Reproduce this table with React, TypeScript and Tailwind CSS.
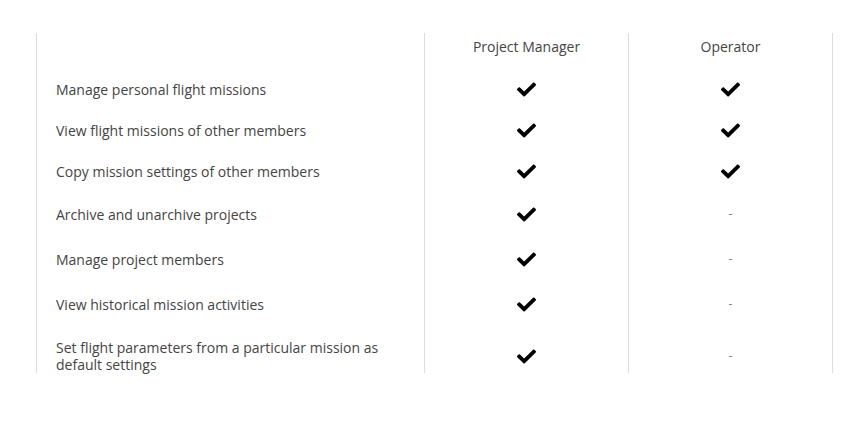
import { FaCheck } from "react-icons/fa";

type Row = { label: string[]; pm: boolean; op: boolean; h: string; pad?: string };

const rows: Row[] = [
  { label: ["Manage personal flight missions"], pm: true, op: true, h: "h-[42px]" },
  { label: ["View flight missions of other members"], pm: true, op: true, h: "h-[40px]" },
  { label: ["Copy mission settings of other members"], pm: true, op: true, h: "h-[42px]" },
  { label: ["Archive and unarchive projects"], pm: true, op: false, h: "h-[44px]" },
  { label: ["Manage project members"], pm: true, op: false, h: "h-[46px]" },
  { label: ["View historical mission activities"], pm: true, op: false, h: "h-[44px]" },
  {
    label: ["Set flight parameters from a particular mission as", "default settings"],
    pm: true,
    op: false,
    h: "h-[47px]",
    pad: "pt-[13px]",
  },
];

const Mark = ({ on }: { on: boolean }) =>
  on ? (
    <FaCheck className="text-black" size={19} />
  ) : (
    <span className="text-[12px] leading-none text-[#777]">-</span>
  );

export default function App() {
  return (
    <div className="min-h-screen bg-white pt-[33px] pl-[36px] font-['Open_Sans',sans-serif] text-[14px] text-[#444]">
      <div className="w-[797px] border-x border-[#dcdcdc]">
        {/* header */}
        <div className="grid h-[35px] grid-cols-[387px_204px_204px] leading-[20px]">
          <div />
          <div className="border-l border-[#dcdcdc] pt-[4px] text-center">Project Manager</div>
          <div className="border-l border-[#dcdcdc] pt-[4px] text-center">Operator</div>
        </div>

        {rows.map((r) => (
          <div key={r.label[0]} className={`grid grid-cols-[387px_204px_204px] ${r.h}`}>
            <div className={`flex flex-col justify-center pl-[19px] leading-[16px] ${r.pad ?? ""}`}>
              {r.label.map((l) => (
                <span key={l} className="leading-[17px]">
                  {l}
                </span>
              ))}
            </div>
            <div className={`flex items-center justify-center border-l border-[#dcdcdc] ${r.pad ?? ""}`}>
              <Mark on={r.pm} />
            </div>
            <div className={`flex items-center justify-center border-l border-[#dcdcdc] ${r.pad ?? ""}`}>
              <Mark on={r.op} />
            </div>
          </div>
        ))}
      </div>
    </div>
  );
}
